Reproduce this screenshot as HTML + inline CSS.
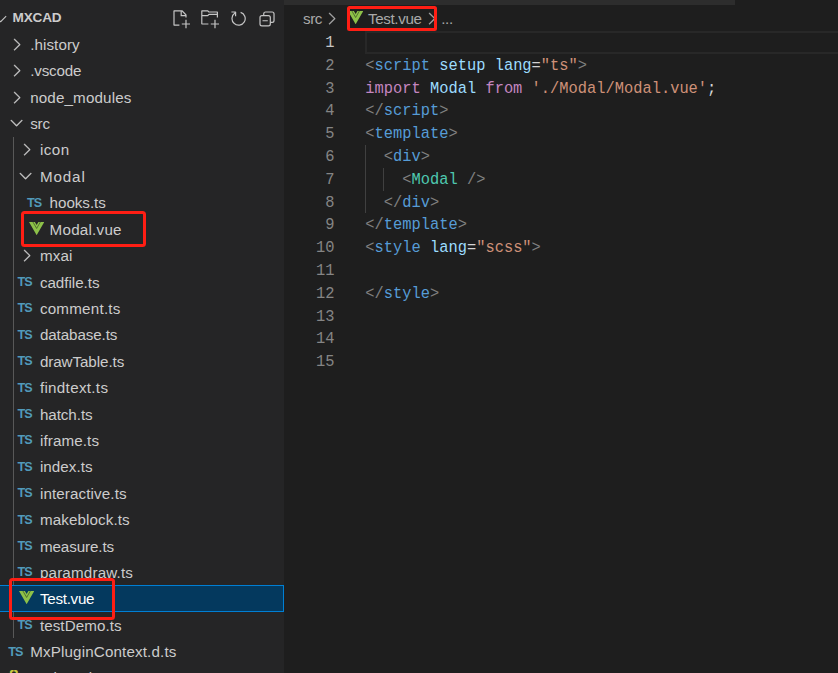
<!DOCTYPE html>
<html>
<head>
<meta charset="utf-8">
<title>MXCAD - Test.vue</title>
<style>
html,body{margin:0;padding:0;}
body{width:838px;height:673px;overflow:hidden;background:#1e1e1e;position:relative;font-family:"Liberation Sans",sans-serif;}
#side{position:absolute;left:0;top:0;width:284px;height:673px;background:#252526;overflow:hidden;}
#ed{position:absolute;left:284px;top:0;width:554px;height:673px;background:#1e1e1e;overflow:hidden;}
.row{position:absolute;left:0;width:284px;height:26.4px;line-height:26.4px;font-size:15.2px;color:#cccccc;white-space:nowrap;}
.row .t{position:absolute;top:1.1px;}
.row .ts{position:absolute;top:0.6px;font-size:12.6px;font-weight:bold;color:#519aba;letter-spacing:-0.9px;}
.row svg{position:absolute;}
.sel{left:-2px;width:286px;background:#04395e;box-shadow:inset 0 0 0 1px #007fd4;color:#ffffff;}
.guide{position:absolute;width:1px;background:#585858;}
.red{position:absolute;border:3px solid #ff1e14;border-radius:3.5px;box-sizing:border-box;}
.ln{position:absolute;left:0;width:50.6px;text-align:right;font-family:"Liberation Mono",monospace;font-size:15.4px;color:#858585;height:22.8px;line-height:22.8px;transform:scaleY(1.1);transform-origin:0 50%;}
.cl{position:absolute;left:81.3px;font-family:"Liberation Mono",monospace;font-size:15.4px;color:#d4d4d4;height:22.8px;line-height:22.8px;white-space:pre;transform:scaleY(1.1);transform-origin:0 50%;}
.g{color:#808080}.b{color:#569cd6}.a{color:#9cdcfe}.s{color:#ce9178}.k{color:#c586c0}.c{color:#4ec9b0}
.bc{position:absolute;top:8.8px;height:20px;line-height:20px;font-size:15.2px;color:#a9a9a9;white-space:nowrap;}
.ic{position:absolute;width:19.2px;height:19.2px;fill:#c5c5c5;}
</style>
</head>
<body>
<div id="side">
  <div class="guide" style="left:13px;top:137px;height:501px;"></div>
<svg style="position:absolute;left:-9.3px;top:8.6px" width="19.2" height="19.2" viewBox="0 0 16 16"><path fill="#c5c5c5" d="M7.976 10.072l4.357-4.357.62.618L8.284 11h-.618L3 6.333l.619-.618 4.357 4.357z"/></svg>
<span style="position:absolute;left:12.6px;top:10.1px;line-height:16px;font-size:13.6px;font-weight:bold;color:#cccccc;letter-spacing:-0.2px" id="hdr">MXCAD</span>
<svg class="ic" style="left:171px;top:9.4px" viewBox="0 0 16 16"><path fill-rule="evenodd" clip-rule="evenodd" d="M9.5 1.1l3.4 3.5.1.4v2h-1V6H8V2H3v11h4v1H2.5l-.5-.5v-12l.5-.5h6.7l.3.1zM9 2v3h2.9L9 2zm4 14h-1v-3H9v-1h3V9h1v3h3v1h-3v3z"/></svg>
<svg class="ic" style="left:200px;top:9.4px" viewBox="0 0 16 16"><path fill-rule="evenodd" clip-rule="evenodd" d="M14.5 2H7.71l-.85-.85L6.51 1h-5l-.5.5v11l.5.5H7v-1H1.99V6h4.49l.35-.15.86-.86H14v1.5l-.001.51h1.011V2.5L14.5 2zm-.51 2h-6.5l-.35.15-.86.86H2v-3h4.29l.85.85.36.15H14l-.01.99zM13 16h-1v-3H9v-1h3V9h1v3h3v1h-3v3z"/></svg>
<svg class="ic" style="left:228.7px;top:9.4px" viewBox="0 0 16 16"><path fill-rule="evenodd" clip-rule="evenodd" d="M4.681 3H2V2h3.5l.5.5V6H5V4a5 5 0 1 0 4.53-.761l.302-.954A6 6 0 1 1 4.681 3z"/></svg>
<svg class="ic" style="left:257px;top:9px;fill:none;stroke:#c5c5c5;stroke-width:1" viewBox="0 0 16 16"><rect x="2.5" y="5.5" width="8.6" height="8.6" rx="1.6"/><path d="M5.6 5.5V4.1A1.6 1.6 0 0 1 7.2 2.5H12.6A1.6 1.6 0 0 1 14.2 4.1V9.5A1.6 1.6 0 0 1 12.6 11.1H11.1M4.6 9.8H9"/></svg>
<div class="row" style="top:30.8px"><svg style="left:6.97px;top:3.98px" width="19.2" height="19.2" viewBox="0 0 16 16"><path fill="#c5c5c5" stroke="#c5c5c5" stroke-width="0.25" d="M10.072 8.024L5.715 3.667l.618-.62L11 7.716v.618L6.333 13l-.618-.619 4.357-4.357z"/></svg><span class="t" id="t0" style="left:30.2px;letter-spacing:0.071px">.history</span></div>
<div class="row" style="top:57.2px"><svg style="left:6.97px;top:3.98px" width="19.2" height="19.2" viewBox="0 0 16 16"><path fill="#c5c5c5" stroke="#c5c5c5" stroke-width="0.25" d="M10.072 8.024L5.715 3.667l.618-.62L11 7.716v.618L6.333 13l-.618-.619 4.357-4.357z"/></svg><span class="t" id="t1" style="left:30.2px;letter-spacing:-0.183px">.vscode</span></div>
<div class="row" style="top:83.6px"><svg style="left:6.97px;top:3.98px" width="19.2" height="19.2" viewBox="0 0 16 16"><path fill="#c5c5c5" stroke="#c5c5c5" stroke-width="0.25" d="M10.072 8.024L5.715 3.667l.618-.62L11 7.716v.618L6.333 13l-.618-.619 4.357-4.357z"/></svg><span class="t" id="t2" style="left:30.2px;letter-spacing:0.136px">node_modules</span></div>
<div class="row" style="top:110.0px"><svg style="left:7.12px;top:2.87px" width="19.2" height="19.2" viewBox="0 0 16 16"><path fill="#c5c5c5" stroke="#c5c5c5" stroke-width="0.25" d="M7.976 10.072l4.357-4.357.62.618L8.284 11h-.618L3 6.333l.619-.618 4.357 4.357z"/></svg><span class="t" id="t3" style="left:30.2px;letter-spacing:-0.200px">src</span></div>
<div class="row" style="top:136.4px"><svg style="left:16.67px;top:3.98px" width="19.2" height="19.2" viewBox="0 0 16 16"><path fill="#c5c5c5" stroke="#c5c5c5" stroke-width="0.25" d="M10.072 8.024L5.715 3.667l.618-.62L11 7.716v.618L6.333 13l-.618-.619 4.357-4.357z"/></svg><span class="t" id="t4" style="left:39.9px;letter-spacing:0.500px">icon</span></div>
<div class="row" style="top:162.8px"><svg style="left:16.22px;top:2.87px" width="19.2" height="19.2" viewBox="0 0 16 16"><path fill="#c5c5c5" stroke="#c5c5c5" stroke-width="0.25" d="M7.976 10.072l4.357-4.357.62.618L8.284 11h-.618L3 6.333l.619-.618 4.357 4.357z"/></svg><span class="t" id="t5" style="left:39.9px;letter-spacing:0.875px">Modal</span></div>
<div class="row" style="top:189.2px"><span class="ts" style="left:26.9px">TS</span><span class="t" id="t6" style="left:49.6px;letter-spacing:-0.043px">hooks.ts</span></div>
<div class="row" style="top:215.6px"><svg style="left:28.8px;top:6.6px" width="15.3" height="13.2" viewBox="0 0 256 221"><path fill="#8dc149" d="M204.8 0H256L128 220.8 0 0h97.92L128 51.2 157.44 0h47.36z"/><path fill="none" stroke="#2b3a1c" stroke-width="13" d="M62 -6L128 108 L194 -6" opacity="0.75"/></svg><span class="t" id="t7" style="left:49.6px;letter-spacing:0.230px">Modal.vue</span></div>
<div class="row" style="top:242.0px"><svg style="left:16.67px;top:3.98px" width="19.2" height="19.2" viewBox="0 0 16 16"><path fill="#c5c5c5" stroke="#c5c5c5" stroke-width="0.25" d="M10.072 8.024L5.715 3.667l.618-.62L11 7.716v.618L6.333 13l-.618-.619 4.357-4.357z"/></svg><span class="t" id="t8" style="left:39.9px;letter-spacing:0.133px">mxai</span></div>
<div class="row" style="top:268.4px"><span class="ts" style="left:17.5px">TS</span><span class="t" id="t9" style="left:39.9px;letter-spacing:-0.033px;top:1.6px">cadfile.ts</span></div>
<div class="row" style="top:294.8px"><span class="ts" style="left:17.5px">TS</span><span class="t" id="t10" style="left:39.9px;letter-spacing:0.222px">comment.ts</span></div>
<div class="row" style="top:321.2px"><span class="ts" style="left:17.5px">TS</span><span class="t" id="t11" style="left:39.9px;letter-spacing:-0.100px">database.ts</span></div>
<div class="row" style="top:347.6px"><span class="ts" style="left:17.5px">TS</span><span class="t" id="t12" style="left:39.9px;letter-spacing:-0.082px">drawTable.ts</span></div>
<div class="row" style="top:374.0px"><span class="ts" style="left:17.5px">TS</span><span class="t" id="t13" style="left:39.9px;letter-spacing:0.310px">findtext.ts</span></div>
<div class="row" style="top:400.4px"><span class="ts" style="left:17.5px">TS</span><span class="t" id="t14" style="left:39.9px;letter-spacing:-0.057px;top:1.6px">hatch.ts</span></div>
<div class="row" style="top:426.8px"><span class="ts" style="left:17.5px">TS</span><span class="t" id="t15" style="left:39.9px;letter-spacing:0.112px">iframe.ts</span></div>
<div class="row" style="top:453.2px"><span class="ts" style="left:17.5px">TS</span><span class="t" id="t16" style="left:39.9px;letter-spacing:0.057px">index.ts</span></div>
<div class="row" style="top:479.6px"><span class="ts" style="left:17.5px">TS</span><span class="t" id="t17" style="left:39.9px;letter-spacing:0.115px">interactive.ts</span></div>
<div class="row" style="top:506.0px"><span class="ts" style="left:17.5px">TS</span><span class="t" id="t18" style="left:39.9px;letter-spacing:0.109px">makeblock.ts</span></div>
<div class="row" style="top:532.4px"><span class="ts" style="left:17.5px">TS</span><span class="t" id="t19" style="left:39.9px;letter-spacing:-0.100px;top:1.6px">measure.ts</span></div>
<div class="row" style="top:558.8px"><span class="ts" style="left:17.5px">TS</span><span class="t" id="t20" style="left:39.9px;letter-spacing:0.173px">paramdraw.ts</span></div>
<div class="row sel" style="top:585.2px"><svg style="left:20.9px;top:6.1px" width="15.3" height="13.2" viewBox="0 0 256 221"><path fill="#8dc149" d="M204.8 0H256L128 220.8 0 0h97.92L128 51.2 157.44 0h47.36z"/><path fill="none" stroke="#2b3a1c" stroke-width="13" d="M62 -6L128 108 L194 -6" opacity="0.75"/></svg><span class="t" id="t21" style="left:41.9px;letter-spacing:-0.271px">Test.vue</span></div>
<div class="row" style="top:611.6px"><span class="ts" style="left:17.5px">TS</span><span class="t" id="t22" style="left:39.9px;letter-spacing:0.070px">testDemo.ts</span></div>
<div class="row" style="top:638.0px"><span class="ts" style="left:8.3px">TS</span><span class="t" id="t23" style="left:30.2px;letter-spacing:0.142px">MxPluginContext.d.ts</span></div>
<div class="row" style="top:664.4px"><span class="ts" style="left:8px;color:#cbcb41;font-size:15px;letter-spacing:0;top:-1px">{}</span><span class="t" id="t24" style="left:30.2px;letter-spacing:-0.400px">package.json</span></div>
</div>
<div id="ed">
<div style="position:absolute;left:0;top:0;width:451px;height:4.7px;background:#2d2d2d"></div>
<span class="bc" id="bc1" style="left:19px;letter-spacing:-0.45px">src</span>
<svg style="position:absolute;left:38.27px;top:8.58px" width="19.2" height="19.2" viewBox="0 0 16 16"><path fill="#a9a9a9" stroke="#a9a9a9" stroke-width="0.25" d="M10.072 8.024L5.715 3.667l.618-.62L11 7.716v.618L6.333 13l-.618-.619 4.357-4.357z"/></svg><svg style="position:absolute;left:63.8px;top:10.8px" width="15.3" height="13.3" viewBox="0 0 256 221"><path fill="#8dc149" d="M204.8 0H256L128 220.8 0 0h97.92L128 51.2 157.44 0h47.36z"/><path fill="none" stroke="#2b3a1c" stroke-width="13" d="M62 -6L128 108 L194 -6" opacity="0.75"/></svg>
<span class="bc" id="bc2" style="left:84px;letter-spacing:-0.37px">Test.vue</span>
<svg style="position:absolute;left:138.27px;top:8.58px" width="19.2" height="19.2" viewBox="0 0 16 16"><path fill="#a9a9a9" stroke="#a9a9a9" stroke-width="0.25" d="M10.072 8.024L5.715 3.667l.618-.62L11 7.716v.618L6.333 13l-.618-.619 4.357-4.357z"/></svg>
<span class="bc" style="left:157.2px;letter-spacing:-0.3px">...</span>
<div style="position:absolute;left:81px;top:31.2px;width:480px;height:22.8px;box-sizing:border-box;border:2.2px solid #282828"></div>
<div class="guide" style="left:81px;top:145px;height:68px;background:#404040"></div>
<div class="guide" style="left:99px;top:168px;height:23px;background:#404040"></div>
<div class="ln" style="top:32.00px;color:#c6c6c6">1</div>
<div class="ln" style="top:54.80px">2</div>
<div class="cl" style="top:54.80px"><span class="g">&lt;</span><span class="b">script</span> <span class="a">setup</span> <span class="a">lang</span>=<span class="s">"ts"</span><span class="g">&gt;</span></div>
<div class="ln" style="top:77.60px">3</div>
<div class="cl" style="top:77.60px"><span class="k">import</span> <span class="a">Modal</span> <span class="k">from</span> <span class="s">'./Modal/Modal.vue'</span>;</div>
<div class="ln" style="top:100.40px">4</div>
<div class="cl" style="top:100.40px"><span class="g">&lt;/</span><span class="b">script</span><span class="g">&gt;</span></div>
<div class="ln" style="top:123.20px">5</div>
<div class="cl" style="top:123.20px"><span class="g">&lt;</span><span class="b">template</span><span class="g">&gt;</span></div>
<div class="ln" style="top:146.00px">6</div>
<div class="cl" style="top:146.00px">  <span class="g">&lt;</span><span class="b">div</span><span class="g">&gt;</span></div>
<div class="ln" style="top:168.80px">7</div>
<div class="cl" style="top:168.80px">    <span class="g">&lt;</span><span class="c">Modal</span> <span class="g">/&gt;</span></div>
<div class="ln" style="top:191.60px">8</div>
<div class="cl" style="top:191.60px">  <span class="g">&lt;/</span><span class="b">div</span><span class="g">&gt;</span></div>
<div class="ln" style="top:214.40px">9</div>
<div class="cl" style="top:214.40px"><span class="g">&lt;/</span><span class="b">template</span><span class="g">&gt;</span></div>
<div class="ln" style="top:237.20px">10</div>
<div class="cl" style="top:237.20px"><span class="g">&lt;</span><span class="b">style</span> <span class="a">lang</span>=<span class="s">"scss"</span><span class="g">&gt;</span></div>
<div class="ln" style="top:260.00px">11</div>
<div class="ln" style="top:282.80px">12</div>
<div class="cl" style="top:282.80px"><span class="g">&lt;/</span><span class="b">style</span><span class="g">&gt;</span></div>
<div class="ln" style="top:305.60px">13</div>
<div class="ln" style="top:328.40px">14</div>
<div class="ln" style="top:351.20px">15</div>
</div>
<div class="red" style="left:347px;top:6px;width:90px;height:25px;border-radius:2.5px"></div>
<div class="red" style="left:21px;top:211.2px;width:125.2px;height:35.4px"></div>
<div class="red" style="left:9.2px;top:578.3px;width:106.2px;height:41.4px"></div>

</body>
</html>
